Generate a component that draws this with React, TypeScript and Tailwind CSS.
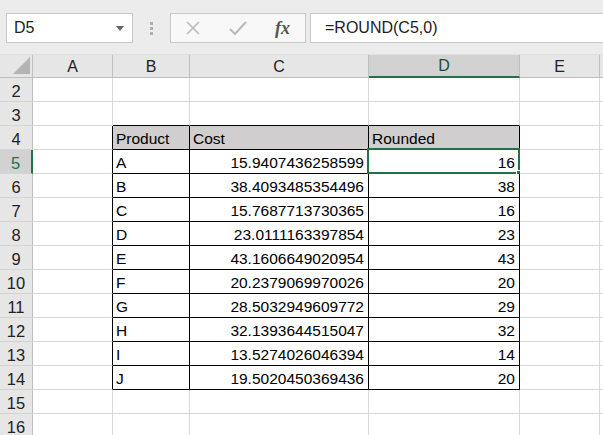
import React from 'react';

const COLS = ['A', 'B', 'C', 'D', 'E'];
const COL_W = ['w-[80px]', 'w-[77px]', 'w-[179px]', 'w-[151px]', 'w-[80px]'];

const DATA: [string, string, string][] = [
  ['A', '15.9407436258599', '16'],
  ['B', '38.4093485354496', '38'],
  ['C', '15.7687713730365', '16'],
  ['D', '23.0111163397854', '23'],
  ['E', '43.1606649020954', '43'],
  ['F', '20.2379069970026', '20'],
  ['G', '28.5032949609772', '29'],
  ['H', '32.1393644515047', '32'],
  ['I', '13.5274026046394', '14'],
  ['J', '19.5020450369436', '20'],
];

const font = { fontFamily: '"Liberation Sans", Arial, sans-serif' };

function Toolbar() {
  return (
    <div className="h-[55px] bg-[#ececec] flex items-start pt-[13px] border-b border-[#e0e0e0]">
      <div className="ml-[6px] w-[127px] h-[30px] bg-white border border-[#c8c8c8] flex items-center justify-between pl-[7px] pr-[8px]">
        <span className="text-[16px] text-[#222]">D5</span>
        <svg width="8" height="5" viewBox="0 0 8 5"><path d="M0 0h8L4 5z" fill="#666" /></svg>
      </div>
      <div className="w-[37px] h-[30px] flex flex-col items-center justify-center gap-[2px]">
        <span className="w-[3px] h-[3px] bg-[#b0b0b0]" />
        <span className="w-[3px] h-[3px] bg-[#b0b0b0]" />
        <span className="w-[3px] h-[3px] bg-[#b0b0b0]" />
      </div>
      <div className="w-[136px] h-[30px] bg-[#f8f8f8] border border-[#c8c8c8] flex items-center">
        <svg className="ml-[14px]" width="16" height="16" viewBox="0 0 16 16">
          <path d="M2 2L14 14M14 2L2 14" stroke="#bbbbbb" strokeWidth="1.6" />
        </svg>
        <svg className="ml-[28px]" width="18" height="16" viewBox="0 0 18 16">
          <path d="M1 9L6 14L17 2" stroke="#bbbbbb" strokeWidth="2.2" fill="none" />
        </svg>
        <span className="ml-[28px] text-[18px] italic font-bold text-[#555]" style={{ fontFamily: '"Liberation Serif", serif' }}>fx</span>
      </div>
      <div className="ml-[4px] flex-1 h-[30px] bg-white border border-[#c8c8c8] border-r-0 flex items-center pl-[14px]">
        <span className="text-[16px] text-[#222]">=ROUND(C5,0)</span>
      </div>
    </div>
  );
}

function ColumnHeader() {
  return (
    <div className="flex h-[23px] bg-[#e6e6e6]">
      <div className="w-[33px] h-full border-r border-b border-[#bfbfbf] relative">
        <svg className="absolute right-[2px] bottom-[3px]" width="17" height="17" viewBox="0 0 17 17">
          <path d="M17 0V17H0z" fill="#b4b4b4" />
        </svg>
      </div>
      {COLS.map((c, i) => {
        const sel = c === 'D';
        return (
          <div
            key={c}
            className={`${COL_W[i]} h-full flex items-center justify-center pt-[1px] text-[16px] border-r ${
              sel ? 'bg-[#d2d2d2] border-[#bfbfbf] border-b-2 border-b-[#217346] text-[#1e4e32]' : 'border-[#bfbfbf] border-b text-[#222]'
            }`}
          >
            {c}
          </div>
        );
      })}
      <div className="flex-1 h-full border-b border-[#bfbfbf]" />
    </div>
  );
}

function Row({ n }: { n: number }) {
  const inTable = n >= 4 && n <= 14;
  const isHead = n === 4;
  const item = n >= 5 && n <= 14 ? DATA[n - 5] : null;
  const selRow = n === 5;
  const grid = 'border-[#d9d9d9]';

  const cell = (col: number) => {
    // col: 0=A ... 4=E
    const tableCol = col >= 1 && col <= 3;
    const rightBlack = inTable && col >= 0 && col <= 3;
    const bottomBlack = n >= 3 && n <= 14 && tableCol;
    let content: React.ReactNode = null;
    let align = 'justify-start pl-[3px]';
    if (isHead && tableCol) content = ['Product', 'Cost', 'Rounded'][col - 1];
    if (item && tableCol) {
      content = item[col - 1];
      if (col > 1) align = 'justify-end pr-[4px]';
    }
    const fill = isHead && tableCol ? 'bg-[#d0cece]' : 'bg-white';
    return (
      <div
        key={col}
        className={`${COL_W[col]} h-full flex items-center pt-[3px] ${align} ${fill} border-r border-b ${
          rightBlack ? 'border-r-black' : grid
        } ${bottomBlack ? 'border-b-black' : 'border-b-[#d9d9d9]'} text-[15.5px] text-black relative`}
      >
        {content}
        {selRow && col === 3 && (
          <div className="absolute -left-[2px] -top-[2px] -right-[1px] -bottom-[1px] border-2 border-[#217346]">
            <span className="absolute -right-[4px] -bottom-[4px] w-[6px] h-[6px] bg-[#217346] border border-white" />
          </div>
        )}
      </div>
    );
  };

  return (
    <div className="flex h-[24px]">
      <div
        className={`w-[33px] h-full flex items-center justify-center pt-[3px] text-[16.5px] border-b border-[#d4d4d4] ${
          selRow ? 'bg-[#d2d2d2] text-[#217346] border-r-2 border-r-[#217346]' : 'bg-[#e6e6e6] text-[#222] border-r border-r-[#bfbfbf]'
        }`}
      >
        {n}
      </div>
      {COLS.map((_, i) => cell(i))}
      <div className="flex-1 h-full bg-white border-b border-[#d9d9d9]" />
    </div>
  );
}

export default function App() {
  const rows = Array.from({ length: 15 }, (_, i) => i + 2);
  return (
    <div className="w-[603px] h-[435px] overflow-hidden bg-white" style={font}>
      <Toolbar />
      <ColumnHeader />
      {rows.map(n => (
        <Row key={n} n={n} />
      ))}
    </div>
  );
}
